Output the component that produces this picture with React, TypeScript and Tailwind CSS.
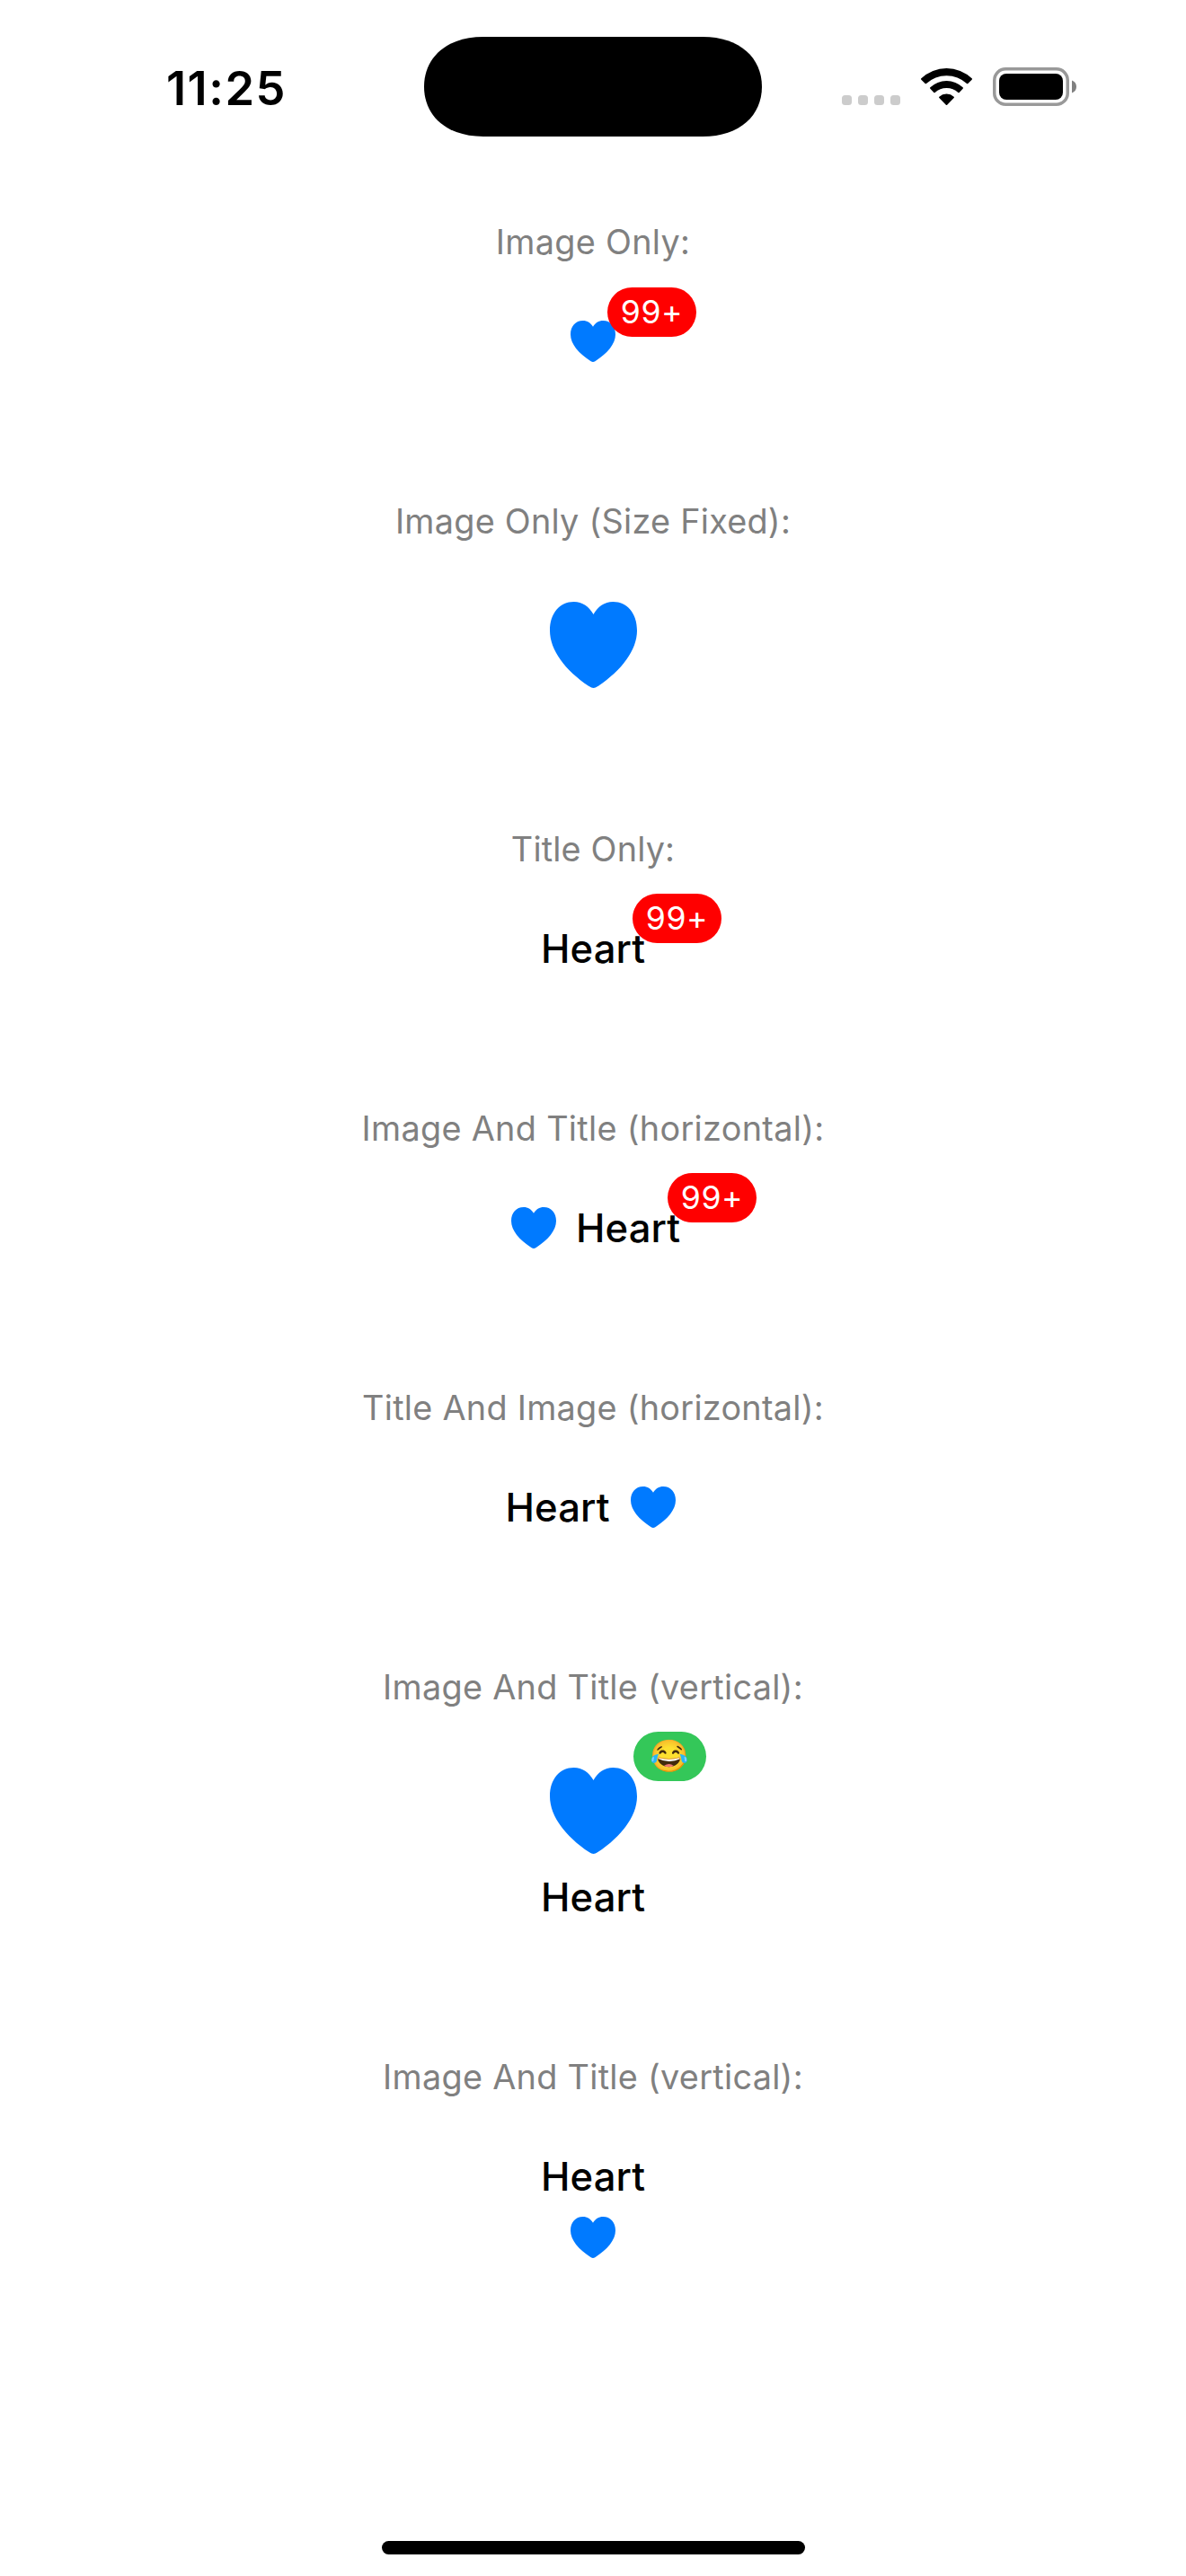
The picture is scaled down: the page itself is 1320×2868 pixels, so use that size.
import React from "react";

function HeartIcon({ className }: { className: string }) {
  return (
    <svg viewBox="0 0 291 288" preserveAspectRatio="none" className={className} fill="#007AFF" aria-hidden="true">
      <path d="M145.5 42C131 16 109 0 80 0C33 0 0 38 0 96C0 162 52 230 132 283Q145.5 293 159 283C239 230 291 162 291 96C291 38 258 0 211 0C182 0 160 16 145.5 42Z" />
    </svg>
  );
}

function SmallHeart() {
  return (
    <span className="flex h-[54px] w-[62px] items-center justify-center">
      <HeartIcon className="h-[46px] w-[50px]" />
    </span>
  );
}

function LargeHeart() {
  return (
    <span className="flex h-[108px] w-[108px] items-center justify-center">
      <HeartIcon className="h-24 w-[97px]" />
    </span>
  );
}

function Title() {
  return (
    <span className="h-[54px] w-[116px] text-[43.6px] leading-[56px] font-medium tracking-[0.1px] whitespace-nowrap text-black">
      Heart
    </span>
  );
}

function CountBadge({ className }: { className: string }) {
  return (
    <span
      className={`absolute left-full flex h-[55px] w-[99px] items-center justify-center rounded-full bg-[#ff0000] text-[35.6px] leading-[55px] tracking-[0.6px] text-white ${className}`}
    >
      99+
    </span>
  );
}

function Section({ label, tracking, children }: { label: string; tracking: string; children: React.ReactNode }) {
  return (
    <section className="flex flex-col items-center pb-[149px]">
      <h2 className={`mb-[60px] text-[37.8px] leading-[48px] font-normal whitespace-nowrap text-[#808080] ${tracking}`}>
        {label}
      </h2>
      <div className="relative flex">{children}</div>
    </section>
  );
}

function StatusBar() {
  return (
    <header className="flex h-[245px] items-start">
      <time className="mt-[66px] ml-[185px] w-[287px] text-[52.3px] leading-[64px] font-semibold tracking-[1.5px]">
        11:25
      </time>
      <svg viewBox="0 0 376 111" className="mt-[41px] h-[111px] w-[376px]" aria-hidden="true">
        <path d="M0 55.5C0 24 24 0 66 0H310C352 0 376 24 376 55.5C376 87 352 111 310 111H66C24 111 0 87 0 55.5Z" />
      </svg>
      <div className="mt-[106px] ml-[89px] flex gap-[7px]">
        <i className="size-[11px] rounded-[3.5px] bg-[#cccccc]" />
        <i className="size-[11px] rounded-[3.5px] bg-[#cccccc]" />
        <i className="size-[11px] rounded-[3.5px] bg-[#cccccc]" />
        <i className="size-[11px] rounded-[3.5px] bg-[#cccccc]" />
      </div>
      <svg viewBox="0 0 171 126" className="mt-[75px] ml-[23px] h-[42px] w-[57px]" aria-hidden="true">
        <path d="M1 41Q-1 39 1 37A122 122 0 0 1 170 37Q172 39 170 41L157 54Q155 56 153 54A99 99 0 0 0 18 54Q16 56 14 54Z" />
        <path d="M31 71Q29 69 31 67A79 79 0 0 1 140 67Q142 69 140 71L128 84Q126 86 124 84A57 57 0 0 0 47 84Q45 86 43 84Z" />
        <path d="M61 102Q59 100 61 98A37 37 0 0 1 110 98Q112 100 110 102L87.500 125Q85.500 127 83.500 125Z" />
      </svg>
      <svg viewBox="0 0 94 43" className="mt-[75px] ml-[23px] h-[43px] w-[94px]" aria-hidden="true">
        <rect x="1.750" y="1.750" width="81.500" height="39.500" rx="12.500" fill="none" stroke="#999999" strokeWidth="3.500" />
        <rect x="7" y="7" width="71" height="29" rx="8" />
        <path d="M88 14.500C91.500 15.800 93 18.500 93 21.500S91.500 27.200 88 28.500Z" fill="#808080" />
      </svg>
    </header>
  );
}

export default function App() {
  return (
    <main className="flex h-[2868px] w-[1320px] flex-col overflow-hidden bg-white font-['Inter',sans-serif] text-black">
      <StatusBar />

      <Section label="Image Only:" tracking="tracking-[0.3px]">
        <SmallHeart />
        <CountBadge className="-top-[33px] -ml-[15px]" />
      </Section>

      <Section label="Image Only (Size Fixed):" tracking="tracking-[0.25px]">
        <LargeHeart />
      </Section>

      <Section label="Title Only:" tracking="tracking-[0.17px]">
        <Title />
        <CountBadge className="-top-[34px] -ml-[14px]" />
      </Section>

      <Section label="Image And Title (horizontal):" tracking="tracking-[0.31px]">
        <div className="flex gap-4">
          <SmallHeart />
          <Title />
        </div>
        <CountBadge className="-top-[34px] -ml-[14px]" />
      </Section>

      <Section label="Title And Image (horizontal):" tracking="tracking-[0.27px]">
        <div className="flex gap-[17px]">
          <Title />
          <SmallHeart />
        </div>
      </Section>

      <Section label="Image And Title (vertical):" tracking="tracking-[0.29px]">
        <div className="flex flex-col items-center gap-[15px]">
          <LargeHeart />
          <Title />
        </div>
        <span className="absolute -top-[34px] left-full -ml-[13px] flex h-[55px] w-[81px] items-center justify-center rounded-full bg-[#34c759] font-['Noto_Color_Emoji'] text-[35px] leading-[55px]">
          😂
        </span>
      </Section>

      <Section label="Image And Title (vertical):" tracking="tracking-[0.29px]">
        <div className="flex flex-col items-center gap-[14px]">
          <Title />
          <SmallHeart />
        </div>
      </Section>

      <footer className="mt-auto mb-6 ml-[425px] h-[15px] w-[471px] shrink-0 rounded-full bg-black" />
    </main>
  );
}
